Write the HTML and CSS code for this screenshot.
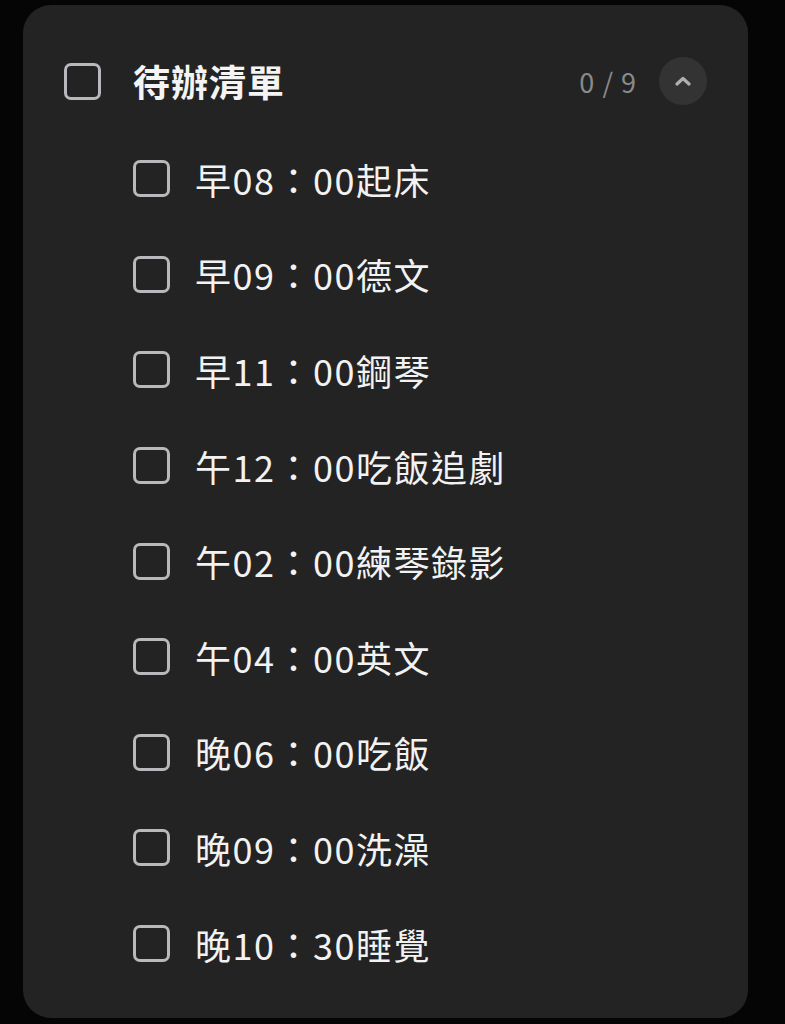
FILE: index.html
```html
<!DOCTYPE html>
<html lang="zh-Hant">
<head>
<meta charset="utf-8">
<link rel="stylesheet" href="styles.css">
</head>
<body>
<div class="card">
  <div class="header">
    <span class="box box-head"></span>
    <span class="title">待辦清單</span>
    <span class="count">0 / 9</span>
    <span class="toggle">
      <svg width="16" height="10" viewBox="0 0 16 10"><path d="M2 8 L8 2.5 L14 8" fill="none" stroke="#b0b0b0" stroke-width="3.2" stroke-linecap="round" stroke-linejoin="round"/></svg>
    </span>
  </div>
  <ul class="list">
    <li class="item"><span class="box"></span><span class="text">早08：00起床</span></li>
    <li class="item"><span class="box"></span><span class="text">早09：00德文</span></li>
    <li class="item"><span class="box"></span><span class="text">早11：00鋼琴</span></li>
    <li class="item"><span class="box"></span><span class="text">午12：00吃飯追劇</span></li>
    <li class="item"><span class="box"></span><span class="text">午02：00練琴錄影</span></li>
    <li class="item"><span class="box"></span><span class="text">午04：00英文</span></li>
    <li class="item"><span class="box"></span><span class="text">晚06：00吃飯</span></li>
    <li class="item"><span class="box"></span><span class="text">晚09：00洗澡</span></li>
    <li class="item"><span class="box"></span><span class="text">晚10：30睡覺</span></li>
  </ul>
</div>
</body>
</html>
```
FILE: styles.css
```css
html, body {
  margin: 0;
  padding: 0;
  background: #050505;
}
body {
  font-family: "Noto Sans CJK TC", "Noto Sans", sans-serif;
  color: #f2f2f2;
  padding: 5px 0 0 23px;
  height: 1024px;
  box-sizing: border-box;
}
.card {
  width: 725px;
  height: 1013px;
  box-sizing: border-box;
  background: #232323;
  border-radius: 28px;
  padding: 52px 41px 0 41px;
}
.header {
  display: flex;
  align-items: center;
  height: 48px;
}
.box {
  flex: none;
  width: 37px;
  height: 37px;
  box-sizing: border-box;
  border: 3.5px solid #b9b9bd;
  border-radius: 7px;
}
.title {
  margin-left: 32px;
  font-size: 37px;
  font-weight: 700;
  letter-spacing: 1px;
  color: #f4f4f4;
  flex: 1;
  line-height: 1;
}
.count {
  font-size: 27px;
  color: #8a8a8a;
  margin-right: 22px;
  letter-spacing: 1px;
}
.toggle {
  width: 48px;
  height: 48px;
  border-radius: 50%;
  background: #333333;
  display: flex;
  align-items: center;
  justify-content: center;
}
.list {
  list-style: none;
  margin: 26px 0 0 0;
  padding: 0 0 0 69px;
}
.item {
  height: 95.6px;
  display: flex;
  align-items: center;
}
.text {
  margin-left: 25px;
  font-family: "Noto Sans CJK JP", "Noto Sans CJK TC", sans-serif;
  font-size: 36px;
  letter-spacing: 1.5px;
  line-height: 1;
  color: #f2f2f2;
}
```
